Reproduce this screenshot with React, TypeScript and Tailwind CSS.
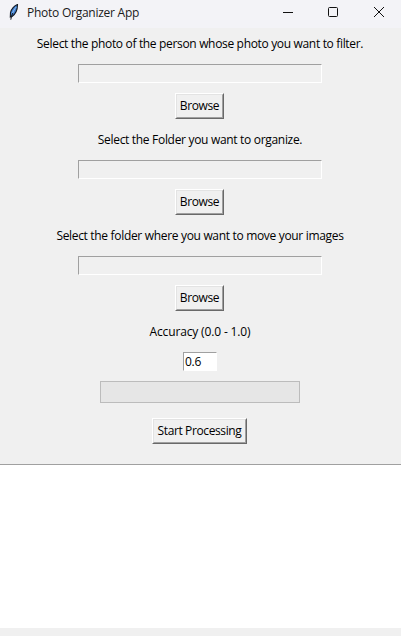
import React from "react";

function Label({ children, className }: { children: React.ReactNode; className: string }) {
  return (
    <div className={`flex h-[21px] items-center justify-center whitespace-nowrap leading-4 ${className}`}>
      <span>{children}</span>
    </div>
  );
}

function Button({ children, className }: { children: React.ReactNode; className: string }) {
  return (
    <button
      className={`mr-px h-[26px] shrink-0 border border-t-white border-l-white border-r-[#696969] border-b-[#696969] tracking-[-0.38px] ${className}`}
    >
      <span className="flex h-full items-center justify-center whitespace-nowrap border border-t-[#e3e3e3] border-l-[#e3e3e3] border-r-[#a0a0a0] border-b-[#a0a0a0] leading-4">
        {children}
      </span>
    </button>
  );
}

function PathPicker({ label, tracking }: { label: string; tracking: string }) {
  return (
    <section className="flex h-24 flex-col items-center pt-[5px]">
      <Label className={tracking}>{label}</Label>
      <div className="mt-2.5 h-[19px] w-[244px] shrink-0 border border-t-[#a0a0a0] border-l-[#a0a0a0] border-r-white border-b-white" />
      <Button className="mt-2.5 w-[49px]">Browse</Button>
    </section>
  );
}

function TitleBar() {
  return (
    <header className="flex h-7 items-center bg-[#f3f3f7] text-[#1a1a1a]">
      <svg className="ml-[8px] mb-1 h-4 w-3 shrink-0" viewBox="0 0 12 16">
        <path d="M9.5 .5C6.5 1.5 3.2 5 2.5 8.5L2.3 13 4 12.5C7 10.5 9.5 6 9.5 .5Z" fill="#3f7fd0" stroke="#141a22" strokeWidth="1.1" />
        <path d="M8.2 3C6.5 5 5 7.5 4.2 10" fill="none" stroke="#8fc0f5" strokeWidth="1" />
        <path d="M4.8 9C3.8 11 3.1 13 2.8 15.7" fill="none" stroke="#141a22" strokeWidth="1" />
      </svg>
      <h1 className="ml-[7px] mb-0.5 whitespace-nowrap leading-4 tracking-[-0.25px]">Photo Organizer App</h1>
      <div className="mr-4 mb-1 ml-auto flex items-center gap-[34px]">
        <svg className="h-3 w-3" viewBox="0 0 12 12"><path d="M2 6.5H12" stroke="#111" /></svg>
        <svg className="h-3 w-3" viewBox="0 0 12 12"><rect x="1.5" y="1.5" width="9" height="9" rx="1" fill="none" stroke="#111" /></svg>
        <svg className="h-3 w-3" viewBox="0 0 12 12"><path d="M1 1L11 11M11 1L1 11" stroke="#111" /></svg>
      </div>
    </header>
  );
}

export default function App() {
  return (
    <div className="flex h-[636px] w-[401px] flex-col overflow-hidden bg-[#f0f0f0] font-['Open_Sans','Noto_Sans',sans-serif] text-xs text-black">
      <TitleBar />
      <main className="flex flex-col pr-px">
        <PathPicker label="Select the photo of the person whose photo you want to filter." tracking="tracking-[-0.33px]" />
        <PathPicker label="Select the Folder you want to organize." tracking="tracking-[-0.31px]" />
        <PathPicker label="Select the folder where you want to move your images" tracking="tracking-[-0.32px]" />
        <section className="flex h-[148px] flex-col items-center pt-[5px]">
          <Label className="tracking-[-0.15px]">Accuracy (0.0 - 1.0)</Label>
          <input
            className="mt-2.5 h-[19px] w-[34px] shrink-0 border border-t-[#a0a0a0] border-l-[#a0a0a0] border-r-white border-b-white bg-white pl-px leading-4 tracking-[-0.25px] outline-none"
            defaultValue="0.6"
          />
          <div className="mt-2.5 h-[22px] w-[200px] shrink-0 border border-[#bcbcbc] bg-[#e6e6e6]" />
          <Button className="mt-[15px] w-[95px]">Start Processing</Button>
        </section>
      </main>
      <div className="h-[164px] shrink-0 border-t border-[#a0a0a0] bg-white" />
    </div>
  );
}
